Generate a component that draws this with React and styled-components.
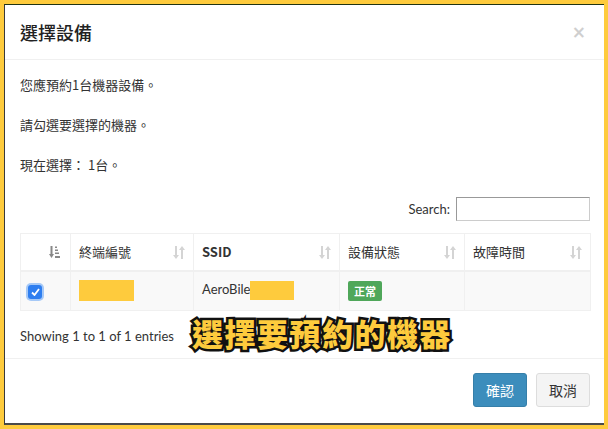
import React from "react";
import styled, { createGlobalStyle } from "styled-components";

const GlobalStyle = createGlobalStyle`
  html, body {
    margin: 0;
    padding: 0;
    background: #fecb3d;
  }
  body {
    font-family: Lato, "Noto Sans CJK TC", sans-serif;
    color: #333;
  }
`;

const Frame = styled.div`
  width: 608px;
  height: 429px;
  box-sizing: border-box;
  padding: 4px 4px 4px 4px;
`;

const Modal = styled.div`
  position: relative;
  height: 421px;
  box-sizing: border-box;
  background: #fff;
  border-top: 1px solid #1f3314;
  border-left: 1px solid #3a3a3a;
  border-bottom: 2px solid #4a4a4a;
  display: flex;
  flex-direction: column;
`;

const Header = styled.div`
  height: 55px;
  box-sizing: border-box;
  padding: 0 15px;
  display: flex;
  align-items: center;
  justify-content: space-between;
  border-bottom: 1px solid #f0f0f0;
`;

const Title = styled.h4`
  margin: 0;
  font-size: 18px;
  font-weight: 500;
  font-family: "Noto Sans CJK TC", sans-serif;
  color: #222;
`;

const Close = styled.span`
  font-size: 17px;
  font-weight: 700;
  color: #cfcfcf;
  margin-right: 3px;
  font-family: "DejaVu Sans", sans-serif;
`;

const Body = styled.div`
  padding: 15px 14px 13px 15px;
  border-bottom: 1px solid #f0f0f0;
`;

const Line = styled.p`
  margin: 0 0 20px;
  font-size: 13px;
  line-height: 20px;
  font-family: "Noto Sans CJK TC", sans-serif;
`;

const SearchRow = styled.div`
  display: flex;
  justify-content: flex-end;
  align-items: center;
  gap: 6px;
  padding-top: 2px;
  margin-bottom: 12px;
  font-size: 13px;
`;

const SearchInput = styled.input`
  width: 134px;
  height: 24px;
  box-sizing: border-box;
  border: 1px solid #ccc;
  border-top-color: #999;
  border-left-color: #999;
`;

const Table = styled.table`
  width: 570px;
  border-collapse: collapse;
  font-size: 13px;
  table-layout: fixed;
`;

const Th = styled.th`
  position: relative;
  height: 37px;
  box-sizing: border-box;
  padding: 0 8px;
  border: 1px solid #f0f0f0;
  border-bottom: 2px solid #f0f0f0;
  text-align: left;
  font-weight: ${(p) => (p.$bold ? 700 : 400)};
  font-family: "Noto Sans CJK TC", sans-serif;
`;

const Td = styled.td`
  height: 40px;
  box-sizing: border-box;
  padding: 0 8px;
  border: 1px solid #f0f0f0;
  background: #f9f9f9;
  vertical-align: middle;
`;

const SortIcon = styled.svg`
  position: absolute;
  right: ${(p) => p.$right || 8}px;
  top: 12px;
`;

const Check = styled.span`
  display: inline-flex;
  align-items: center;
  justify-content: center;
  width: 14px;
  height: 14px;
  border-radius: 3px;
  background: #2e7ef0;
  box-shadow: 0 0 0 2px #a6c9f7;
  margin-left: -1px;
`;

const Redact = styled.span`
  display: inline-block;
  width: ${(p) => p.$w}px;
  height: ${(p) => p.$h}px;
  background: #fecb3d;
  vertical-align: middle;
`;

const Badge = styled.span`
  display: inline-block;
  background: #4fa75a;
  color: #fff;
  font-size: 11px;
  font-weight: 700;
  padding: 2px 6px;
  border-radius: 2px;
  font-family: "Noto Sans CJK TC", sans-serif;
`;

const Info = styled.div`
  padding-top: 16px;
  font-size: 13px;
  line-height: 18px;
`;

const Caption = styled.div`
  position: absolute;
  left: 187px;
  top: 305px;
  font-family: "Noto Sans CJK TC", sans-serif;
  font-weight: 900;
  font-size: 31px;
  letter-spacing: 1.5px;
  color: #fecb3d;
  -webkit-text-stroke: 5px #111;
  paint-order: stroke fill;
`;

const Footer = styled.div`
  flex: 1;
  display: flex;
  justify-content: flex-end;
  align-items: flex-start;
  gap: 9px;
  padding: 14px 14px 0 0;
`;

const Button = styled.button`
  height: 34px;
  width: ${(p) => p.$w}px;
  box-sizing: border-box;
  border-radius: 3px;
  font-size: 14px;
  font-family: "Noto Sans CJK TC", sans-serif;
  background: ${(p) => (p.$primary ? "#3c8dbc" : "#f4f4f4")};
  color: ${(p) => (p.$primary ? "#fff" : "#333")};
  border: 1px solid ${(p) => (p.$primary ? "#367fa9" : "#ddd")};
`;

const SortBoth = ({ right }) => (
  <SortIcon $right={right} width="12" height="13" viewBox="0 0 12 13">
    <g fill="#d4d4d4">
      <rect x="2" y="0" width="2" height="10" />
      <polygon points="0,9 6,9 3,13" />
      <rect x="8" y="3" width="2" height="10" />
      <polygon points="6,4 12,4 9,0" />
    </g>
  </SortIcon>
);

const SortAmount = () => (
  <SortIcon $right={10} width="11" height="12" viewBox="0 0 11 12">
    <g fill="#888">
      <rect x="1.5" y="0" width="2" height="9" />
      <polygon points="0,8 5,8 2.5,12" />
      <rect x="6" y="10" width="5" height="2" />
      <rect x="6" y="6.5" width="4" height="1.5" />
      <rect x="6" y="3.5" width="3" height="1.5" />
      <rect x="6" y="0.5" width="2" height="1.5" />
    </g>
  </SortIcon>
);

export default function App() {
  return (
    <>
      <GlobalStyle />
      <Frame>
        <Modal>
          <Header>
            <Title>選擇設備</Title>
            <Close>×</Close>
          </Header>
          <Body>
            <Line>您應預約1台機器設備。</Line>
            <Line>請勾選要選擇的機器。</Line>
            <Line>現在選擇： 1台。</Line>
            <SearchRow>
              Search:
              <SearchInput />
            </SearchRow>
            <Table>
              <colgroup>
                <col style={{ width: 50 }} />
                <col style={{ width: 123 }} />
                <col style={{ width: 146 }} />
                <col style={{ width: 125 }} />
                <col style={{ width: 126 }} />
              </colgroup>
              <thead>
                <tr>
                  <Th>
                    <SortAmount />
                  </Th>
                  <Th>
                    終端編號
                    <SortBoth />
                  </Th>
                  <Th $bold>
                    SSID
                    <SortBoth />
                  </Th>
                  <Th>
                    設備狀態
                    <SortBoth />
                  </Th>
                  <Th>
                    故障時間
                    <SortBoth />
                  </Th>
                </tr>
              </thead>
              <tbody>
                <tr>
                  <Td>
                    <Check>
                      <svg width="9" height="8" viewBox="0 0 9 8">
                        <polyline points="1,4.5 3.5,7 8,1" fill="none" stroke="#fff" strokeWidth="1.8" />
                      </svg>
                    </Check>
                  </Td>
                  <Td>
                    <Redact $w={55} $h={21} />
                  </Td>
                  <Td>
                    AeroBile
                    <Redact $w={44} $h={19} />
                  </Td>
                  <Td>
                    <Badge>正常</Badge>
                  </Td>
                  <Td />
                </tr>
              </tbody>
            </Table>
            <Info>Showing 1 to 1 of 1 entries</Info>
          </Body>
          <Caption>選擇要預約的機器</Caption>
          <Footer>
            <Button $primary $w={54}>確認</Button>
            <Button $w={54}>取消</Button>
          </Footer>
        </Modal>
      </Frame>
    </>
  );
}
